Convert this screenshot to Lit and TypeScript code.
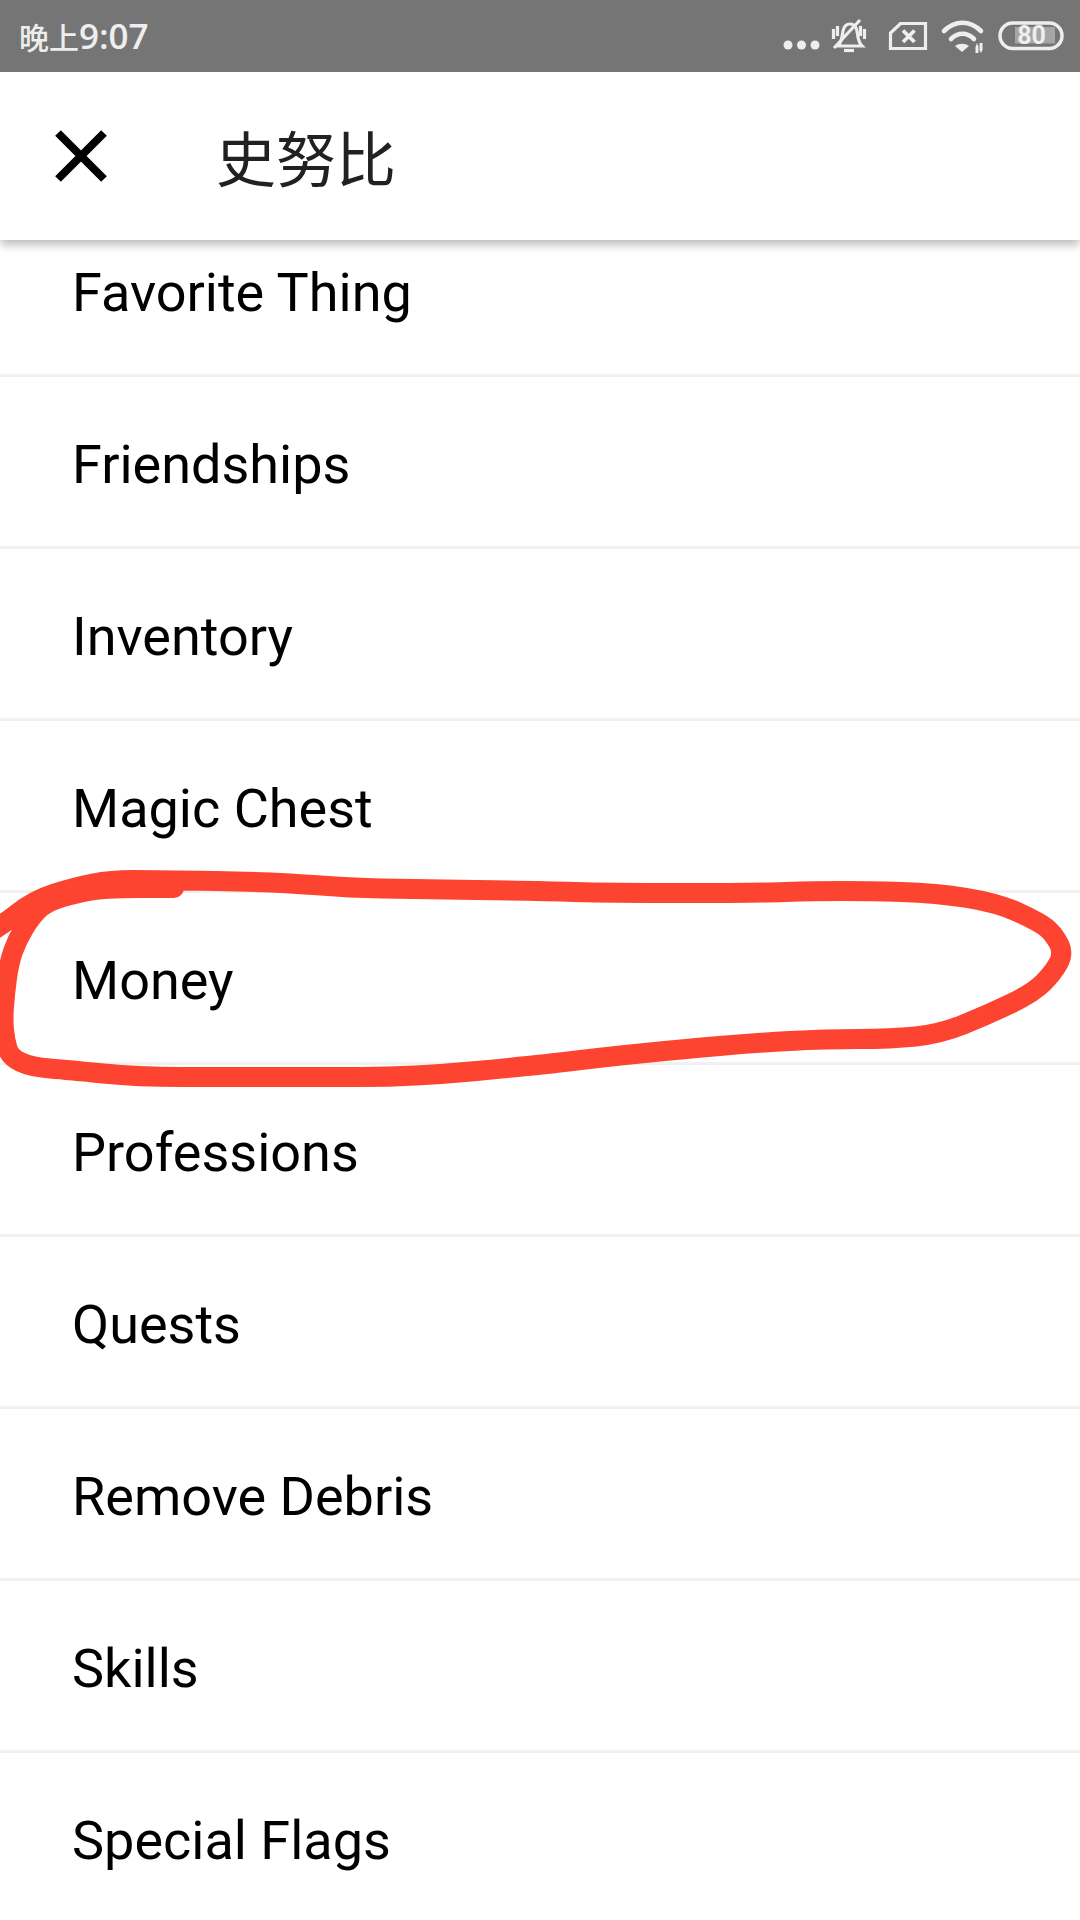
import { LitElement, html, css, svg } from 'lit'
import { customElement } from 'lit/decorators.js'

const ITEMS = [
  'Favorite Thing',
  'Friendships',
  'Inventory',
  'Magic Chest',
  'Money',
  'Professions',
  'Quests',
  'Remove Debris',
  'Skills',
  'Special Flags',
]

// Hand-drawn circle around "Money", traced from the screenshot.
const SCRIBBLE: [number, number][] = [
  [-14, 934], [0, 927], [34, 900], [75, 887], [111, 880], [155, 880], [276, 882], [351, 888], [413, 889],
  [540, 891], [609, 893], [754, 893], [816, 891], [867, 891], [936, 893], [998, 903], [1039, 922],
  [1053, 933], [1064, 953], [1053, 973], [1033, 993], [987, 1015], [940, 1034], [891, 1039], [826, 1039],
  [754, 1043], [685, 1049], [605, 1057], [540, 1065], [413, 1077], [310, 1077], [224, 1077], [138, 1077],
  [69, 1070], [31, 1067], [10, 1057], [5, 1040], [3, 1020], [5, 993], [9, 963], [17, 940], [31, 917],
  [45, 903], [69, 895], [103, 888], [174, 888],
]

/** Rounds the traced points off into a path: each point becomes a control point between two midpoints. */
function smooth(pts: [number, number][]): string {
  let d = `M${pts[0][0]} ${pts[0][1]}`
  for (let i = 1; i < pts.length - 1; i++) {
    const mx = (pts[i][0] + pts[i + 1][0]) / 2
    const my = (pts[i][1] + pts[i + 1][1]) / 2
    d += ` Q${pts[i][0]} ${pts[i][1]} ${mx} ${my}`
  }
  const last = pts[pts.length - 1]
  return `${d} L${last[0]} ${last[1]}`
}

@customElement('app-root')
export class AppRoot extends LitElement {
  static styles = css`
    :host {
      display: block;
      position: relative;
      height: 1920px;
      overflow: hidden;
      background: #fff;
      font-family: Roboto, 'Noto Sans CJK SC', sans-serif;
    }
    .status {
      position: relative;
      z-index: 3;
      height: 72px;
      display: flex;
      align-items: center;
      padding: 0 16px 0 19px;
      background: #757575;
      color: #eee;
    }
    .time {
      font: 500 30px/72px 'Noto Sans CJK SC', sans-serif;
      flex: 1;
    }
    .digits {
      font: 600 35px/72px 'Open Sans', sans-serif;
    }
    .status svg {
      display: block;
      height: 72px;
      flex: none;
    }
    .dots {
      width: 38px;
    }
    .bell {
      width: 38px;
      margin-left: 10px;
    }
    .sim {
      width: 40px;
      margin-left: 20px;
    }
    .wifi {
      width: 46px;
      margin-left: 12px;
    }
    .battery {
      width: 66px;
      margin-left: 12px;
    }
    .line {
      fill: none;
      stroke: #eee;
      stroke-width: 3.2;
    }
    .arc {
      stroke-width: 4.6;
      stroke-linecap: round;
    }
    .solid {
      fill: #eee;
    }
    .battery text {
      font: 700 25px Roboto, sans-serif;
      fill: #eee;
      text-anchor: middle;
    }
    .bar {
      position: relative;
      z-index: 2;
      height: 168px;
      display: flex;
      align-items: center;
      background: #fff;
      box-shadow: 0 4px 10px rgba(0, 0, 0, 0.3);
    }
    .close {
      display: block;
      width: 60px;
      height: 60px;
      margin-left: 48px;
    }
    .title {
      margin-left: 108px;
      font: 400 60px/1 'Noto Sans CJK SC', sans-serif;
      color: #212121;
    }
    .list {
      /* the list is scrolled: the first row sits partly under the bar */
      margin-top: -35px;
    }
    .row {
      box-sizing: border-box;
      height: 172px;
      display: flex;
      align-items: center;
      padding: 5px 0 0 72px;
      border-bottom: 3px solid #f1f1f1;
      font-size: 54px;
      color: #000;
    }
    .scribble {
      position: absolute;
      left: 0;
      top: 0;
      z-index: 4;
      width: 1080px;
      height: 1920px;
      pointer-events: none;
    }
  `

  render() {
    return html`
      <div class="status">
        <span class="time">晚上<span class="digits">9:07</span></span>
        <svg class="dots" viewBox="782 0 38 72">
          <circle class="solid" cx="788" cy="45" r="4.500" />
          <circle class="solid" cx="801.500" cy="45" r="4.500" />
          <circle class="solid" cx="815" cy="45" r="4.500" />
        </svg>
        <svg class="bell" viewBox="830 0 38 72">
          <path class="line" d="M838 46 C842 42 842 36 843 31 C844 26 847 24 850 24 C853 24 856 26 857 31 C858 37 858 42 862 46 Z" />
          <path class="line" d="M844 50.500 H854" />
          <path class="line" d="M834 48 L860 20" />
          <path class="line" d="M833.500 29 V39 M837.500 26 V36 M860.500 26 V36 M864.500 29 V39" />
        </svg>
        <svg class="sim" viewBox="888 0 40 72">
          <path class="line" d="M890.500 33 L900.500 23.500 H925.500 V48.500 H890.500 Z" />
          <path class="line" style="stroke-width:3.800" d="M903 30.500 L914.500 42 M914.500 30.500 L903 42" />
        </svg>
        <svg class="wifi" viewBox="940 0 46 72">
          <path class="line arc" d="M944 31 C955 20 970 20 981 31" />
          <path class="line arc" d="M951 39 C958 32 967 32 974 39" />
          <path class="solid" d="M955 46 C959 43 965 43 969 46 L962 52 Z" />
          <path class="solid" d="M975.500 47 L977 43 L978.500 47 V53 H975.500 Z M979.500 43 H982.500 V50 L981 53 L979.500 50 Z" />
        </svg>
        <svg class="battery" viewBox="998 0 66 72">
          <rect class="line" style="stroke-width:3.500" x="1000" y="23" width="62" height="25.500" rx="12.700" />
          <rect x="1015" y="27" width="40" height="16.500" fill="#eee" opacity="0.4" />
          <text x="1031.500" y="44">80</text>
        </svg>
      </div>
      <div class="bar">
        <svg class="close" viewBox="48 126 60 60">
          <path d="M58 133 L104 179 M104 133 L58 179" stroke="#000" stroke-width="8" fill="none" />
        </svg>
        <span class="title">史努比</span>
      </div>
      <div class="list">${ITEMS.map((t) => html`<div class="row">${t}</div>`)}</div>
      <svg class="scribble" viewBox="0 0 1080 1920">
        ${svg`<path d=${smooth(SCRIBBLE)} fill="none" stroke="#fc4430" stroke-width="20" stroke-linejoin="round" stroke-linecap="round" />`}
      </svg>
    `
  }
}
